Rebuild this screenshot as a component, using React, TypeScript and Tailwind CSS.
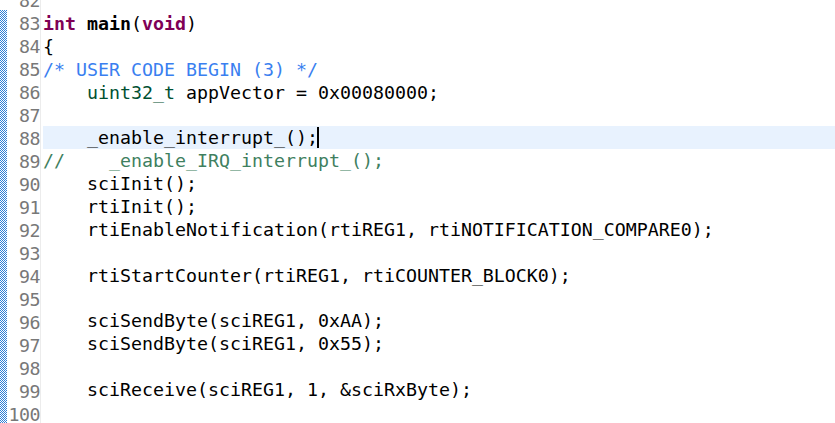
import React from "react";

type Seg = { t: string; c?: string };

const K = "text-[#7f0055] font-bold";
const T = "text-[#005032]";
const CB = "text-[#3a7ff0]";
const CG = "text-[#3f7f5f]";

const lines: { n: number; segs: Seg[]; hl?: boolean; cursor?: boolean }[] = [
  { n: 82, segs: [] },
  { n: 83, segs: [{ t: "int", c: K }, { t: " " }, { t: "main", c: "font-bold" }, { t: "(" }, { t: "void", c: K }, { t: ")" }] },
  { n: 84, segs: [{ t: "{" }] },
  { n: 85, segs: [{ t: "/* USER CODE BEGIN (3) */", c: CB }] },
  { n: 86, segs: [{ t: "    " }, { t: "uint32_t", c: T }, { t: " appVector = 0x00080000;" }] },
  { n: 87, segs: [] },
  { n: 88, segs: [{ t: "    _enable_interrupt_();" }], hl: true, cursor: true },
  { n: 89, segs: [{ t: "//    _enable_IRQ_interrupt_();", c: CG }] },
  { n: 90, segs: [{ t: "    sciInit();" }] },
  { n: 91, segs: [{ t: "    rtiInit();" }] },
  { n: 92, segs: [{ t: "    rtiEnableNotification(rtiREG1, rtiNOTIFICATION_COMPARE0);" }] },
  { n: 93, segs: [] },
  { n: 94, segs: [{ t: "    rtiStartCounter(rtiREG1, rtiCOUNTER_BLOCK0);" }] },
  { n: 95, segs: [] },
  { n: 96, segs: [{ t: "    sciSendByte(sciREG1, 0xAA);" }] },
  { n: 97, segs: [{ t: "    sciSendByte(sciREG1, 0x55);" }] },
  { n: 98, segs: [] },
  { n: 99, segs: [{ t: "    sciReceive(sciREG1, 1, &sciRxByte);" }] },
  { n: 100, segs: [] },
];

function Hatch() {
  return (
    <svg width="8" height="413" className="block" shapeRendering="crispEdges">
      <defs>
        <pattern id="chk" width="2" height="2" patternUnits="userSpaceOnUse">
          <rect x="0" y="0" width="2" height="2" fill="#ffffff" />
          <rect x="0" y="0" width="1" height="1" fill="#2f7fd6" />
          <rect x="1" y="1" width="1" height="1" fill="#2f7fd6" />
        </pattern>
      </defs>
      <rect x="0" y="0" width="7" height="413" fill="url(#chk)" />
    </svg>
  );
}

export default function App() {
  return (
    <div
      className="w-[835px] h-[423px] overflow-hidden bg-white flex text-[18.27px] leading-[23px]"
      style={{ fontFamily: '"DejaVu Sans Mono", "Liberation Mono", monospace' }}
    >
      <div className="w-[8px] shrink-0 flex flex-col pt-[10px]">
        <Hatch />
      </div>
      <div className="w-[32px] shrink-0 flex flex-col -mt-[11px] text-[#787878] text-right">
        {lines.map((l) => (
          <div key={l.n} className="h-[23px] whitespace-pre tracking-[-0.5px]">
            {l.n}
          </div>
        ))}
      </div>
      <div className="w-[1px] shrink-0 bg-[#ececec]" />
      <div className="w-[2px] shrink-0" />
      <div className="flex-1 flex flex-col -mt-[11px] text-black">
        {lines.map((l) => (
          <div
            key={l.n}
            className={`h-[23px] whitespace-pre flex items-center ${l.hl ? "bg-[#e8f2fe]" : ""}`}
          >
            <span>
              {l.segs.map((s, i) => (
                <span key={i} className={s.c}>
                  {s.t}
                </span>
              ))}
            </span>
            {l.cursor && <span className="inline-block w-[2px] h-[21px] bg-black ml-[-1px]" />}
          </div>
        ))}
      </div>
    </div>
  );
}
